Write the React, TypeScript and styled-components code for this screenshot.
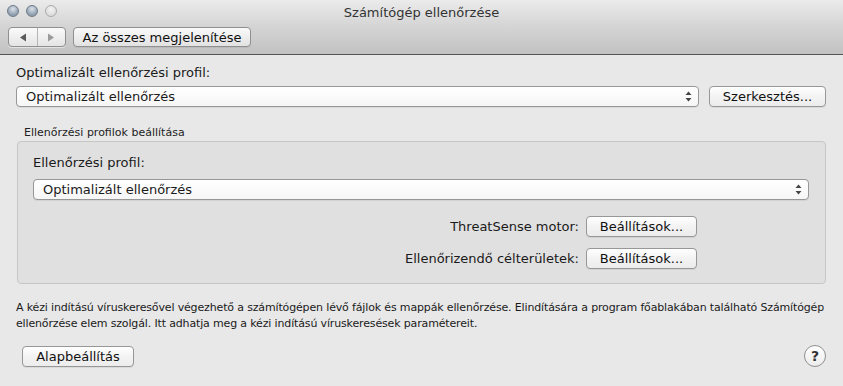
import React from "react";
import styled, { createGlobalStyle } from "styled-components";

const Global = createGlobalStyle`
  html, body { margin: 0; padding: 0; background: #e8e8e8; }
  body { font-family: "DejaVu Sans", "Liberation Sans", sans-serif; color: #1a1a1a; }
  * { box-sizing: border-box; }
`;

const Window = styled.div`
  width: 843px;
  height: 386px;
  display: flex;
  flex-direction: column;
  background: #e8e8e8;
  overflow: hidden;
`;

const TitleBar = styled.div`
  height: 55px;
  display: flex;
  flex-direction: column;
  background: linear-gradient(#ebebeb, #d6d6d6 45%, #c2c2c2);
  border-bottom: 1px solid #555;
`;

const TitleRow = styled.div`
  position: relative;
  height: 23px;
  display: flex;
  align-items: center;
  justify-content: center;
`;

const Lights = styled.div`
  position: absolute;
  left: 7px;
  top: 5px;
  display: flex;
  gap: 7px;
`;

const Light = styled.div<{ $off?: boolean }>`
  width: 12px;
  height: 12px;
  border-radius: 50%;
  border: 1px solid ${(p) => (p.$off ? "#aaa" : "#6f7b88")};
  background: ${(p) =>
    p.$off
      ? "radial-gradient(circle at 50% 35%, #f4f4f4, #d2d2d2)"
      : "radial-gradient(circle at 50% 30%, #dbe3ec, #98a6b6 60%, #7d8b9c)"};
`;

const Title = styled.div`
  font-size: 13px;
  color: #333;
  padding-top: 2px;
`;

const Toolbar = styled.div`
  display: flex;
  align-items: center;
  gap: 7px;
  padding: 4px 0 0 8px;
`;

const Segmented = styled.div`
  display: flex;
  width: 58px;
  height: 20px;
  border: 1px solid #8f8f8f;
  border-radius: 4px;
  background: linear-gradient(#fafafa, #e4e4e4);
  box-shadow: 0 1px 0 rgba(255,255,255,0.5);
  overflow: hidden;
`;

const Segment = styled.div<{ $first?: boolean }>`
  flex: 1;
  display: flex;
  align-items: center;
  justify-content: center;
  border-right: ${(p) => (p.$first ? "1px solid #b5b5b5" : "none")};
`;

const Button = styled.button<{ $w?: number }>`
  height: 21px;
  width: ${(p) => (p.$w ? `${p.$w}px` : "auto")};
  padding: 0;
  border: 1px solid #979797;
  border-radius: 4px;
  background: linear-gradient(#ffffff, #f3f3f3 50%, #ececec);
  box-shadow: 0 1px 0 rgba(0,0,0,0.06);
  font-family: inherit;
  font-size: 13px;
  color: #111;
  line-height: 19px;
  white-space: nowrap;
  flex-shrink: 0;
`;

const ToolbarButton = styled(Button)`
  height: 20px;
  border-color: #8f8f8f;
  background: linear-gradient(#fafafa, #e2e2e2);
`;

const Content = styled.div`
  display: flex;
  flex-direction: column;
  padding: 0 17px 0 16px;
`;

const Label = styled.div`
  font-size: 13px;
  line-height: 16px;
  height: 16px;
  white-space: nowrap;
`;

const TopLabel = styled(Label)`
  margin-top: 10px;
`;

const PopupRow = styled.div`
  display: flex;
  gap: 10px;
  margin-top: 5px;
`;

const Popup = styled.div`
  flex: 1;
  height: 21px;
  display: flex;
  align-items: center;
  justify-content: space-between;
  padding: 0 6px 0 9px;
  border: 1px solid #979797;
  border-radius: 4px;
  background: linear-gradient(#ffffff, #f6f6f6);
  box-shadow: 0 1px 0 rgba(0,0,0,0.06);
  font-size: 13px;
`;

const GroupTitle = styled.div`
  font-size: 11px;
  line-height: 13px;
  margin: 19px 0 0 8px;
  color: #222;
`;

const Group = styled.div`
  margin: 2px 0 0 1px;
  height: 143px;
  display: flex;
  flex-direction: column;
  padding: 13px 16px 0 15px;
  border: 1px solid #c6c6c6;
  border-radius: 4px;
  background: #e0e0e0;
`;

const GroupPopup = styled(Popup)`
  flex: none;
  margin-top: 8px;
`;

const SettingRows = styled.div`
  display: flex;
  flex-direction: column;
  gap: 11px;
  margin-top: 16px;
  padding-right: 112px;
`;

const SettingRow = styled.div`
  display: flex;
  justify-content: flex-end;
  align-items: center;
  gap: 7px;
`;

const Description = styled.div`
  margin-top: 16px;
  font-size: 11px;
  line-height: 16px;
  letter-spacing: -0.15px;
`;

const Footer = styled.div`
  display: flex;
  justify-content: space-between;
  align-items: center;
  margin-top: 13px;
  padding-left: 6px;
`;

const Help = styled.div`
  width: 22px;
  height: 22px;
  border-radius: 50%;
  border: 1px solid #8f8f8f;
  background: linear-gradient(#ffffff, #ececec);
  display: flex;
  align-items: center;
  justify-content: center;
  font-size: 14px;
  font-weight: bold;
  color: #333;
`;

const Stepper = () => (
  <svg width="7" height="11" viewBox="0 0 7 11">
    <path d="M3.5 0.5 L6.5 4 L0.5 4 Z" fill="#444" />
    <path d="M3.5 10.5 L6.5 7 L0.5 7 Z" fill="#444" />
  </svg>
);

const Tri = ({ dir, color }: { dir: "l" | "r"; color: string }) => (
  <svg width="8" height="9" viewBox="0 0 8 9">
    {dir === "l" ? (
      <path d="M1 4.5 L7 0.5 L7 8.5 Z" fill={color} />
    ) : (
      <path d="M7 4.5 L1 0.5 L1 8.5 Z" fill={color} />
    )}
  </svg>
);

export default function App() {
  return (
    <Window>
      <Global />
      <TitleBar>
        <TitleRow>
          <Lights>
            <Light />
            <Light />
            <Light $off />
          </Lights>
          <Title>Számítógép ellenőrzése</Title>
        </TitleRow>
        <Toolbar>
          <Segmented>
            <Segment $first>
              <Tri dir="l" color="#5a5a5a" />
            </Segment>
            <Segment>
              <Tri dir="r" color="#9a9a9a" />
            </Segment>
          </Segmented>
          <ToolbarButton $w={178}>Az összes megjelenítése</ToolbarButton>
        </Toolbar>
      </TitleBar>
      <Content>
        <TopLabel>Optimalizált ellenőrzési profil:</TopLabel>
        <PopupRow>
          <Popup>
            <span>Optimalizált ellenőrzés</span>
            <Stepper />
          </Popup>
          <Button $w={117}>Szerkesztés...</Button>
        </PopupRow>
        <GroupTitle>Ellenőrzési profilok beállítása</GroupTitle>
        <Group>
          <Label>Ellenőrzési profil:</Label>
          <GroupPopup>
            <span>Optimalizált ellenőrzés</span>
            <Stepper />
          </GroupPopup>
          <SettingRows>
            <SettingRow>
              <Label>ThreatSense motor:</Label>
              <Button $w={111}>Beállítások...</Button>
            </SettingRow>
            <SettingRow>
              <Label>Ellenőrizendő célterületek:</Label>
              <Button $w={111}>Beállítások...</Button>
            </SettingRow>
          </SettingRows>
        </Group>
        <Description>
          A kézi indítású víruskeresővel végezhető a számítógépen lévő fájlok és mappák ellenőrzése. Elindítására a program főablakában található Számítógép ellenőrzése elem szolgál. Itt adhatja meg a kézi indítású víruskeresések paramétereit.
        </Description>
        <Footer>
          <Button $w={112}>Alapbeállítás</Button>
          <Help>?</Help>
        </Footer>
      </Content>
    </Window>
  );
}
